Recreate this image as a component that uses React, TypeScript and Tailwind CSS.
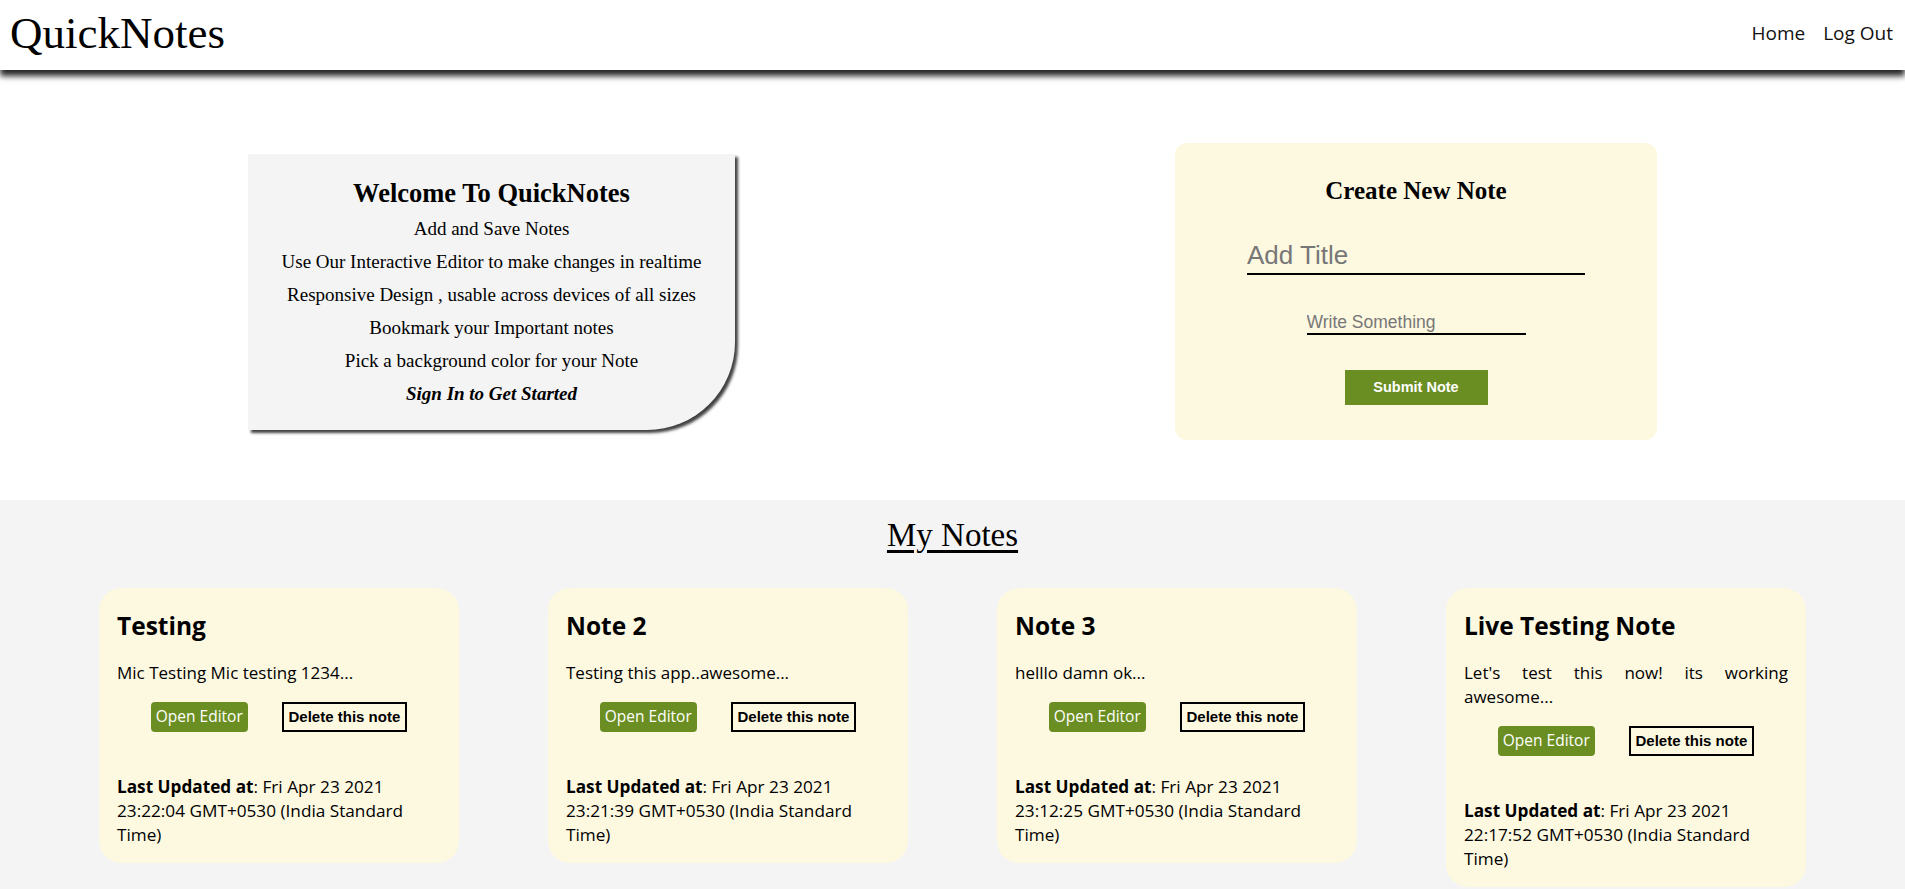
import React from 'react';

const notes = [
  { title: 'Testing', body: 'Mic Testing Mic testing 1234...', time: '23:22:04' },
  { title: 'Note 2', body: 'Testing this app..awesome...', time: '23:21:39' },
  { title: 'Note 3', body: 'helllo damn ok...', time: '23:12:25' },
  { title: 'Live Testing Note', body: "Let's test this now! its working awesome...", time: '22:17:52' },
];

const serif = "font-['Liberation_Serif','Times_New_Roman',serif]";
const sans = "font-['Open_Sans','Noto_Sans',sans-serif]";
const arial = "font-['Liberation_Sans',Arial,sans-serif]";

function NoteCard({ title, body, time }: { title: string; body: string; time: string }) {
  return (
    <div className={`w-[360px] bg-[#fdf8e0] rounded-[22px] pt-[22px] px-[18px] pb-[16px] text-black ${sans}`}>
      <h3 className="text-[24.5px] leading-[32px] font-bold">{title}</h3>
      <p className="mt-[19px] text-[17px] leading-6 text-justify">{body}</p>
      <div className="mt-[17px] flex justify-evenly items-center">
        <button className={`h-[30px] px-[5px] bg-[#6b8e23] text-white rounded-[4px] text-[15.5px] ${sans}`}>Open Editor</button>
        <button className={`h-[30px] px-[5px] border-2 border-black text-[15px] font-bold ${arial}`}>Delete this note</button>
      </div>
      <p className="mt-[43px] text-[17.2px] leading-6">
        <span className="font-bold">Last Updated at</span>
        <span>: Fri Apr 23 2021 {time} GMT+0530 (India Standard Time)</span>
      </p>
    </div>
  );
}

export default function App() {
  return (
    <div className="min-h-screen bg-white">
      {/* header */}
      <header className="relative z-10 h-[70px] flex items-center justify-between pl-[10px] pr-[12px] pb-[4px] bg-white shadow-[0_6px_6px_rgba(0,0,0,0.85)]">
        <h1 className={`text-[45px] leading-none ${serif}`}>QuickNotes</h1>
        <nav className={`flex gap-[18px] text-[19px] text-[#111] ${sans}`}>
          <a>Home</a>
          <a>Log Out</a>
        </nav>
      </header>

      {/* intro + form */}
      <section className="flex justify-between items-center px-[248px] pt-[73px] pb-[60px]">
        <div className={`w-[487px] h-[276px] bg-[#f4f4f4] rounded-br-[88px] shadow-[3px_3px_3px_rgba(0,0,0,0.75)] flex flex-col items-center pt-[21px] text-black ${serif}`}>
          <h2 className="text-[26.5px] font-bold leading-[36px]">Welcome To QuickNotes</h2>
          <p className="text-[19px] leading-[33px] mt-[1px]">Add and Save Notes</p>
          <p className="text-[19px] leading-[33px]">Use Our Interactive Editor to make changes in realtime</p>
          <p className="text-[19px] leading-[33px]">Responsive Design , usable across devices of all sizes</p>
          <p className="text-[19px] leading-[33px]">Bookmark your Important notes</p>
          <p className="text-[19px] leading-[33px]">Pick a background color for your Note</p>
          <p className="text-[19px] leading-[33px] font-bold italic">Sign In to Get Started</p>
        </div>

        <div className="w-[482px] h-[297px] bg-[#fdf8e0] rounded-[12px] flex flex-col items-center pt-[33px]">
          <h2 className={`text-[25px] font-bold leading-[30px] ${serif}`}>Create New Note</h2>
          <input
            placeholder="Add Title"
            className={`mt-[32px] w-[338px] bg-transparent border-b-2 border-black outline-none text-[26px] leading-[35px] placeholder:text-[#777] ${arial}`}
          />
          <input
            placeholder="Write Something"
            className={`mt-[36px] w-[219px] bg-transparent border-b-2 border-black outline-none text-[17.5px] leading-[22px] placeholder:text-[#777] ${arial}`}
          />
          <button className={`mt-[35px] w-[143px] h-[35px] bg-[#6b8e23] text-white font-bold text-[14.5px] ${arial}`}>Submit Note</button>
        </div>
      </section>

      {/* notes */}
      <section className="bg-[#f4f4f4] pt-[14px] pb-[40px]">
        <h2 className={`text-center text-[33px] leading-[42px] underline underline-offset-[4px] ${serif}`}>My Notes</h2>
        <div className="mt-[32px] flex justify-between items-start px-[99px]">
          {notes.map((n) => (
            <NoteCard key={n.title} {...n} />
          ))}
        </div>
      </section>
    </div>
  );
}
